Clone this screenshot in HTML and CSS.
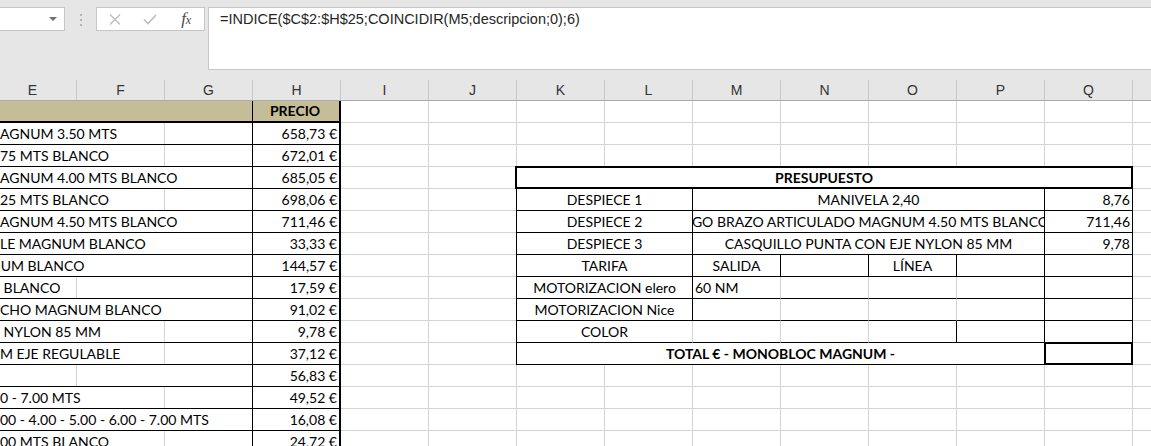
FILE: index.html
```html
<!DOCTYPE html>
<html>
  <head>
    <meta charset="utf-8">
    <title>Presupuesto Monobloc Magnum</title>
    <link rel="stylesheet" href="styles.css">
  </head>
  <body>
    <!-- Formula bar -->
    <div class="toolbar">
      <div class="namebox"><span class="caret"></span></div>
      <div class="grip"><span></span><span></span><span></span></div>
      <div class="fxbox">
        <svg width="12" height="11" viewBox="0 0 12 11"><path d="M1 0.5L11 10.5M11 0.5L1 10.5" stroke="#bcbcbc" stroke-width="1.3" fill="none"/></svg>
        <svg width="14" height="11" viewBox="0 0 14 11"><path d="M1 5.5L5 9.5L13 1" stroke="#bcbcbc" stroke-width="1.6" fill="none"/></svg>
        <span class="fx">f<span>x</span></span>
      </div>
      <div class="formula">=INDICE($C$2:$H$25;COINCIDIR(M5;descripcion;0);6)</div>
    </div>

    <!-- Column letters -->
    <div class="colheads">
      <div>E</div><div>F</div><div>G</div><div>H</div><div>I</div><div>J</div><div>K</div>
      <div>L</div><div>M</div><div>N</div><div>O</div><div>P</div><div>Q</div><div></div>
    </div>

    <div class="sheet">
      <!-- Price list (columns E:H) -->
      <div class="prices">
        <div class="desc head"></div><div class="price head">PRECIO</div>
        <div class="desc gl-g">AGNUM 3.50 MTS</div><div class="price">658,73 €</div>
        <div class="desc gl-g">75 MTS BLANCO</div><div class="price">672,01 €</div>
        <div class="desc">AGNUM 4.00 MTS BLANCO</div><div class="price">685,05 €</div>
        <div class="desc gl-g">25 MTS BLANCO</div><div class="price">698,06 €</div>
        <div class="desc">AGNUM 4.50 MTS BLANCO</div><div class="price">711,46 €</div>
        <div class="desc">LE MAGNUM BLANCO</div><div class="price">33,33 €</div>
        <div class="desc cut">NUM BLANCO</div><div class="price">144,57 €</div>
        <div class="desc gl-f">&nbsp;BLANCO</div><div class="price">17,59 €</div>
        <div class="desc">CHO MAGNUM BLANCO</div><div class="price">91,02 €</div>
        <div class="desc gl-g">&nbsp;NYLON 85 MM</div><div class="price">9,78 €</div>
        <div class="desc gl-g">M EJE REGULABLE</div><div class="price">37,12 €</div>
        <div class="desc gl-f"></div><div class="price">56,83 €</div>
        <div class="desc gl-g">0 - 7.00 MTS</div><div class="price">49,52 €</div>
        <div class="desc">00 - 4.00 - 5.00 - 6.00 - 7.00 MTS</div><div class="price">16,08 €</div>
        <div class="desc gl-g">00 MTS BLANCO</div><div class="price">24,72 €</div>
      </div>

      <!-- Budget (columns K:Q) -->
      <div class="budget">
        <div class="title">PRESUPUESTO</div>

        <div class="c label">DESPIECE 1</div>
        <div class="c wide">MANIVELA 2,40</div>
        <div class="c num">8,76</div>

        <div class="c label">DESPIECE 2</div>
        <div class="c wide">IGO BRAZO ARTICULADO MAGNUM 4.50 MTS BLANCO</div>
        <div class="c num">711,46</div>

        <div class="c label">DESPIECE 3</div>
        <div class="c wide">CASQUILLO PUNTA CON EJE NYLON 85 MM</div>
        <div class="c num">9,78</div>

        <div class="c label">TARIFA</div>
        <div class="c">SALIDA</div>
        <div class="c"></div>
        <div class="c">LÍNEA</div>
        <div class="c"></div>
        <div class="c"></div>

        <div class="c label">MOTORIZACION elero</div>
        <div class="c left soft">60 NM</div>
        <div class="c soft"></div>
        <div class="c soft"></div>
        <div class="c"></div>
        <div class="c"></div>

        <div class="c label">MOTORIZACION Nice</div>
        <div class="c soft"></div>
        <div class="c soft"></div>
        <div class="c soft"></div>
        <div class="c"></div>
        <div class="c"></div>

        <div class="c label soft">COLOR</div>
        <div class="c soft"></div>
        <div class="c soft"></div>
        <div class="c"></div>
        <div class="c"></div>
        <div class="c"></div>

        <div class="c label total">TOTAL € - MONOBLOC MAGNUM -</div>
        <div class="c sum"></div>
      </div>
    </div>
  </body>
</html>
```

FILE: styles.css
```css
body {
  margin: 0;
  width: 1151px;
  height: 446px;
  overflow: hidden;
  background: #fff;
  font-family: Lato, "Open Sans", sans-serif;
  font-size: 14px;
  color: #000;
}

/* Formula bar */
.toolbar {
  display: flex;
  align-items: flex-start;
  height: 80px;
  padding-top: 7px;
  box-sizing: border-box;
  background: #e6e6e6;
}
.namebox {
  display: flex;
  align-items: center;
  justify-content: flex-end;
  width: 66px;
  height: 24px;
  margin-left: -1px;
  padding-right: 7px;
  box-sizing: border-box;
  border: 1px solid #c6c6c6;
  background: #fff;
}
.caret {
  border-left: 4px solid transparent;
  border-right: 4px solid transparent;
  border-top: 4px solid #707070;
}
.grip {
  display: flex;
  flex-direction: column;
  align-items: center;
  gap: 3px;
  width: 31px;
  padding-top: 7px;
}
.grip span {
  width: 2px;
  height: 2px;
  background: #b4b4b4;
}
.fxbox {
  display: grid;
  grid-template-columns: repeat(3, 1fr);
  align-items: center;
  justify-items: center;
  width: 109px;
  height: 24px;
  box-sizing: border-box;
  border: 1px solid #c6c6c6;
  background: #fff;
}
.fx {
  font-family: "Liberation Serif", serif;
  font-style: italic;
  font-size: 17px;
  line-height: 18px;
  color: #4a4a4a;
}
.fx span {
  font-size: 12px;
}
.formula {
  flex: 1;
  height: 63px;
  margin-left: 3px;
  margin-right: -1px;
  padding: 3px 0 0 11px;
  box-sizing: border-box;
  border: 1px solid #c6c6c6;
  background: #fff;
  font-family: "Liberation Sans", Arial, sans-serif;
  font-size: 14.5px;
  line-height: 17px;
  color: #262626;
}

/* Column letters */
.colheads {
  display: grid;
  grid-template-columns: repeat(14, 88px);
  height: 21px;
  margin-left: -11px;
  box-sizing: border-box;
  border-bottom: 1px solid #ababab;
  background: #e6e6e6;
}
.colheads div {
  border-right: 1px solid #c8c8c8;
  text-align: center;
  font-family: "Liberation Sans", Arial, sans-serif;
  font-size: 14px;
  line-height: 20px;
  color: #333;
}

/* Sheet with gridlines */
.sheet {
  display: grid;
  grid-template-columns: repeat(14, 88px);
  grid-template-rows: repeat(16, 22px);
  margin-left: -11px;
  background-image:
    repeating-linear-gradient(to right, transparent 0 87px, #d4d4d4 87px 88px),
    repeating-linear-gradient(to bottom, transparent 0 21px, #d4d4d4 21px 22px);
}

/* Price list */
.prices {
  grid-column: 1 / 5;
  grid-row: 1 / 17;
  display: grid;
  grid-template-columns: 264px 88px;
  grid-auto-rows: 22px;
  background: #fff;
}
.prices div {
  box-sizing: border-box;
  border-bottom: 1px solid #000;
  line-height: 21px;
  white-space: nowrap;
  overflow: hidden;
}
.desc {
  border-right: 1px solid #000;
  padding-left: 11px;
}
.desc.cut {
  text-indent: -10px;
}
.gl-f {
  background: linear-gradient(#d4d4d4, #d4d4d4) no-repeat 87px 0 / 1px 100%;
}
.gl-g {
  background: linear-gradient(#d4d4d4, #d4d4d4) no-repeat 175px 0 / 1px 100%;
}
.price {
  border-right: 2px solid #000;
  padding-right: 2px;
  text-align: right;
}
.prices .head {
  background: #c4bd97;
  border-bottom-width: 2px;
  line-height: 20px;
  font-weight: 700;
  text-align: center;
}

/* Budget */
.budget {
  grid-column: 7 / 14;
  grid-row: 4 / 13;
  margin: -1px 0 0 -1px;
  display: grid;
  grid-template-columns: 177px repeat(5, 88px);
  grid-template-rows: 23px repeat(8, 22px);
  background: #fff;
}
.title {
  grid-column: 1 / -1;
  margin-left: -1px;
  border: 2px solid #000;
  font-weight: 700;
  text-align: center;
  line-height: 19px;
}
.c {
  display: flex;
  align-items: center;
  justify-content: center;
  box-sizing: border-box;
  border-right: 1px solid #000;
  border-bottom: 1px solid #000;
  white-space: nowrap;
  overflow: hidden;
}
.c.label {
  border-left: 1px solid #000;
}
.c.soft {
  border-right-color: #d4d4d4;
}
.c.wide {
  grid-column: span 4;
}
.c.left {
  justify-content: flex-start;
  padding-left: 2px;
}
.c.num {
  justify-content: flex-end;
  padding-right: 2px;
}
.c.total {
  grid-column: span 5;
  font-weight: 700;
}
.c.sum {
  margin: -1px 0 0 -1px;
  border: 2px solid #000;
}
```
